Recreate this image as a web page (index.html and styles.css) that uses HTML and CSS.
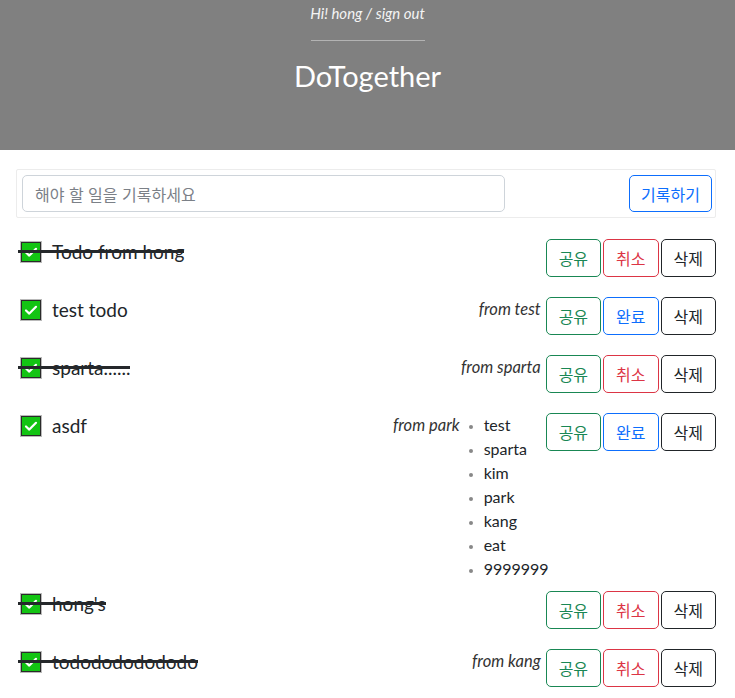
FILE: index.html
```html
<!DOCTYPE html>
<html lang="ko">
<head>
<meta charset="utf-8">
<title>DoTogether</title>
<link rel="stylesheet" href="styles.css">
</head>
<body>
<header class="hero">
  <p class="greet">Hi! hong / sign out</p>
  <hr class="hero-rule">
  <h1 class="hero-title">DoTogether</h1>
</header>
<main class="wrap">
  <div class="composer">
    <input class="composer-input" type="text" placeholder="해야 할 일을 기록하세요">
    <button class="btn btn-primary btn-add">기록하기</button>
  </div>

  <div class="todo">
    <div class="todo-main done">
      <span class="check"><svg viewBox="0 0 22 22" width="22" height="22"><rect x="0.5" y="0.5" width="21" height="21" fill="#13c413" stroke="#b9b9b9"/><rect x="1.5" y="1.5" width="19" height="19" fill="none" stroke="#2a2a2a"/><path d="M6 11.5 L9.3 14.6 L16 7.8" fill="none" stroke="#fff" stroke-width="2.2" stroke-linecap="round" stroke-linejoin="round"/></svg></span>
      <span class="todo-title">Todo from hong</span>
    </div>
    <div class="todo-side">
      <div class="btns"><button class="btn btn-success">공유</button><button class="btn btn-danger">취소</button><button class="btn btn-dark">삭제</button></div>
    </div>
  </div>

  <div class="todo">
    <div class="todo-main">
      <span class="check"><svg viewBox="0 0 22 22" width="22" height="22"><rect x="0.5" y="0.5" width="21" height="21" fill="#13c413" stroke="#b9b9b9"/><rect x="1.5" y="1.5" width="19" height="19" fill="none" stroke="#2a2a2a"/><path d="M6 11.5 L9.3 14.6 L16 7.8" fill="none" stroke="#fff" stroke-width="2.2" stroke-linecap="round" stroke-linejoin="round"/></svg></span>
      <span class="todo-title">test todo</span>
    </div>
    <div class="todo-side">
      <span class="from">from test</span>
      <div class="btns"><button class="btn btn-success">공유</button><button class="btn btn-primary">완료</button><button class="btn btn-dark">삭제</button></div>
    </div>
  </div>

  <div class="todo">
    <div class="todo-main done">
      <span class="check"><svg viewBox="0 0 22 22" width="22" height="22"><rect x="0.5" y="0.5" width="21" height="21" fill="#13c413" stroke="#b9b9b9"/><rect x="1.5" y="1.5" width="19" height="19" fill="none" stroke="#2a2a2a"/><path d="M6 11.5 L9.3 14.6 L16 7.8" fill="none" stroke="#fff" stroke-width="2.2" stroke-linecap="round" stroke-linejoin="round"/></svg></span>
      <span class="todo-title">sparta......</span>
    </div>
    <div class="todo-side">
      <span class="from">from sparta</span>
      <div class="btns"><button class="btn btn-success">공유</button><button class="btn btn-danger">취소</button><button class="btn btn-dark">삭제</button></div>
    </div>
  </div>

  <div class="todo">
    <div class="todo-main">
      <span class="check"><svg viewBox="0 0 22 22" width="22" height="22"><rect x="0.5" y="0.5" width="21" height="21" fill="#13c413" stroke="#b9b9b9"/><rect x="1.5" y="1.5" width="19" height="19" fill="none" stroke="#2a2a2a"/><path d="M6 11.5 L9.3 14.6 L16 7.8" fill="none" stroke="#fff" stroke-width="2.2" stroke-linecap="round" stroke-linejoin="round"/></svg></span>
      <span class="todo-title">asdf</span>
    </div>
    <div class="todo-side">
      <span class="from">from park</span>
      <ul class="shared">
        <li>test</li>
        <li>sparta</li>
        <li>kim</li>
        <li>park</li>
        <li>kang</li>
        <li>eat</li>
        <li>9999999</li>
      </ul>
      <div class="btns"><button class="btn btn-success">공유</button><button class="btn btn-primary">완료</button><button class="btn btn-dark">삭제</button></div>
    </div>
  </div>

  <div class="todo">
    <div class="todo-main done">
      <span class="check"><svg viewBox="0 0 22 22" width="22" height="22"><rect x="0.5" y="0.5" width="21" height="21" fill="#13c413" stroke="#b9b9b9"/><rect x="1.5" y="1.5" width="19" height="19" fill="none" stroke="#2a2a2a"/><path d="M6 11.5 L9.3 14.6 L16 7.8" fill="none" stroke="#fff" stroke-width="2.2" stroke-linecap="round" stroke-linejoin="round"/></svg></span>
      <span class="todo-title">hong's</span>
    </div>
    <div class="todo-side">
      <div class="btns"><button class="btn btn-success">공유</button><button class="btn btn-danger">취소</button><button class="btn btn-dark">삭제</button></div>
    </div>
  </div>

  <div class="todo">
    <div class="todo-main done">
      <span class="check"><svg viewBox="0 0 22 22" width="22" height="22"><rect x="0.5" y="0.5" width="21" height="21" fill="#13c413" stroke="#b9b9b9"/><rect x="1.5" y="1.5" width="19" height="19" fill="none" stroke="#2a2a2a"/><path d="M6 11.5 L9.3 14.6 L16 7.8" fill="none" stroke="#fff" stroke-width="2.2" stroke-linecap="round" stroke-linejoin="round"/></svg></span>
      <span class="todo-title">tododododododo</span>
    </div>
    <div class="todo-side">
      <span class="from">from kang</span>
      <div class="btns"><button class="btn btn-success">공유</button><button class="btn btn-danger">취소</button><button class="btn btn-dark">삭제</button></div>
    </div>
  </div>
</main>
</body>
</html>
```

FILE: styles.css
```css
* { box-sizing: border-box; }

body {
  margin: 0;
  font-family: Lato, "Noto Sans CJK KR", sans-serif;
  color: #212529;
  background: #fff;
  overflow: hidden;
}

.hero {
  background: #808080;
  height: 150px;
  padding-top: 3px;
  display: flex;
  flex-direction: column;
  align-items: center;
  color: #fff;
}

.greet {
  margin: 0;
  font-size: 15px;
  font-style: italic;
  line-height: 20px;
  color: #f4f4f4;
}

.hero-rule {
  width: 114px;
  border: 0;
  border-top: 1px solid #b3b3b3;
  margin: 17px 0 0;
}

.hero-title {
  margin: 17px 0 0;
  font-size: 29px;
  font-weight: 400;
  line-height: 36px;
}

.wrap {
  width: 700px;
  margin: 19px 0 0 16px;
}

.composer {
  display: flex;
  justify-content: space-between;
  align-items: center;
  border: 1px solid #ececec;
  border-radius: 2px;
  padding: 5px 3px 5px 5px;
  margin-bottom: 21px;
}

.composer-input {
  width: 483px;
  height: 37px;
  border: 1px solid #ced4da;
  border-radius: 5px;
  padding: 0 12px;
  font-family: "Noto Sans CJK KR", sans-serif;
  font-size: 16px;
  color: #212529;
}
.composer-input::placeholder { color: #7b8087; }

.btn {
  font-family: "Noto Sans CJK KR", sans-serif;
  font-size: 16px;
  line-height: 24px;
  padding: 6px 12px;
  height: 38px;
  background: #fff;
  border: 1px solid;
  border-radius: 5px;
  cursor: pointer;
}
.btn-add { height: 37px; padding: 5px 11px; }
.btn-primary { color: #0d6efd; border-color: #0d6efd; }
.btn-success { color: #198754; border-color: #198754; }
.btn-danger { color: #dc3545; border-color: #dc3545; }
.btn-dark { color: #212529; border-color: #212529; }

.todo {
  display: flex;
  justify-content: space-between;
  align-items: flex-start;
  margin-bottom: 10px;
}

.todo-main {
  position: relative;
  display: flex;
  align-items: flex-start;
  gap: 10px;
  padding: 2px 0 0 4px;
}
.todo-main.done::after {
  content: "";
  position: absolute;
  left: 2px;
  right: 0;
  top: 11px;
  height: 3px;
  background: #25282b;
}

.check { display: block; width: 22px; height: 22px; }
.check svg { display: block; }

.todo-title {
  font-size: 19px;
  line-height: 22px;
  color: #212529;
}

.todo-side {
  display: flex;
  align-items: flex-start;
}

.from {
  font-style: italic;
  font-size: 16.5px;
  line-height: 24px;
  color: #333;
  margin-right: 5px;
}

.shared {
  margin: 0;
  padding-left: 19px;
  width: 81px;
  font-size: 16px;
  line-height: 24px;
}
.shared li::marker { color: #888; font-size: 12px; }

.btns {
  display: flex;
  gap: 2px;
  margin-bottom: 10px;
}
```
